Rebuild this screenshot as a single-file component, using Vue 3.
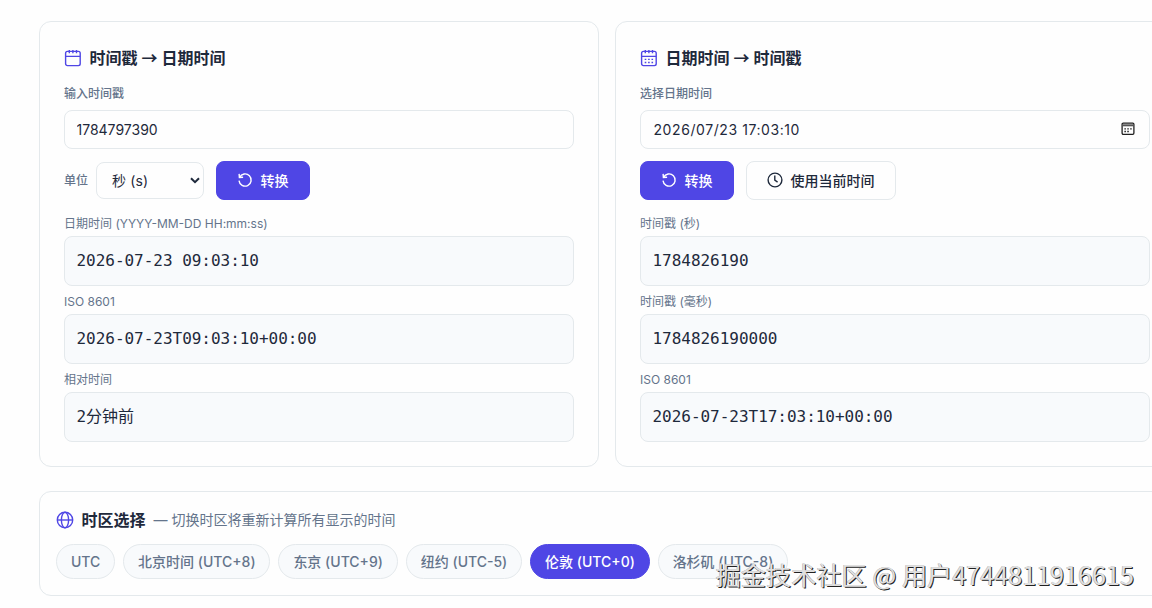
<template>
  <div class="page">
    <div class="content">
      <div class="converter-grid">
        <!-- 时间戳转日期 -->
        <section class="card">
          <h2 class="card-title">
            <svg class="title-icon" viewBox="0 0 18 18">
              <rect x="1.6" y="2.4" width="14.6" height="14.2" rx="1.8" />
              <path d="M1.6 7.4h14.6M5.3 1v3.2M8.9 1v3.2M12.5 1v3.2" />
            </svg>
            <span>时间戳 <span class="arrow">→</span> 日期时间</span>
          </h2>
          <label class="field-label">输入时间戳</label>
          <input v-model="timestamp" class="field" type="text" />
          <div class="actions">
            <span class="unit-label">单位</span>
            <div class="select">
              <span>秒 (s)</span>
              <svg class="chevron" viewBox="0 0 10 7"><path d="M1 1.2l4 4 4-4" /></svg>
            </div>
            <button class="btn primary">
              <svg class="btn-icon" viewBox="0 0 16 16">
                <path d="M2.6 5.3A6.1 6.1 0 1 1 2 8.7M2.1 1.9l.3 3.6 3.7-.3" />
              </svg>
              <span>转换</span>
            </button>
          </div>
          <div v-for="item in dateResults" :key="item.label" class="result">
            <div class="result-label">{{ item.label }}</div>
            <div class="result-value">{{ item.value }}</div>
          </div>
        </section>

        <!-- 日期转时间戳 -->
        <section class="card">
          <h2 class="card-title">
            <svg class="title-icon" viewBox="0 0 18 18">
              <rect x="1.6" y="2.4" width="14.6" height="14.2" rx="1.8" />
              <path d="M1.6 7.4h14.6M5.3 1v3.2M8.9 1v3.2M12.5 1v3.2" />
              <path class="dots" d="M4.7 10.4h1.6M8.1 10.4h1.6M11.5 10.4h1.6M4.7 13.5h1.6M8.1 13.5h1.6M11.5 13.5h1.6" />
            </svg>
            <span>日期时间 <span class="arrow">→</span> 时间戳</span>
          </h2>
          <label class="field-label">选择日期时间</label>
          <div class="field datetime">
            <span>2026/07/23 17:03:10</span>
            <svg class="picker-icon" viewBox="0 0 14 14">
              <rect x="1.1" y="1.1" width="11.8" height="11.2" rx="1.2" />
              <path d="M1 3.3h12" class="bar" />
              <path class="cells" d="M3.4 6.8h1.5M6.3 6.8h1.5M9.2 6.8h1.5M3.4 9.5h1.5M6.3 9.5h1.5" />
            </svg>
          </div>
          <div class="actions">
            <button class="btn primary">
              <svg class="btn-icon" viewBox="0 0 16 16">
                <path d="M2.6 5.3A6.1 6.1 0 1 1 2 8.7M2.1 1.9l.3 3.6 3.7-.3" />
              </svg>
              <span>转换</span>
            </button>
            <button class="btn outline">
              <svg class="btn-icon" viewBox="0 0 16 16">
                <circle cx="8" cy="8" r="6.9" />
                <path d="M7.8 3.6v4.6l2.8 1.9" />
              </svg>
              <span>使用当前时间</span>
            </button>
          </div>
          <div v-for="item in stampResults" :key="item.label" class="result">
            <div class="result-label">{{ item.label }}</div>
            <div class="result-value">{{ item.value }}</div>
          </div>
        </section>
      </div>

      <!-- 时区 -->
      <section class="card zone-card">
        <h2 class="zone-title">
          <svg class="title-icon" viewBox="0 0 18 18">
            <circle cx="9" cy="9" r="7.7" />
            <ellipse cx="9" cy="9" rx="3.6" ry="7.7" />
            <path d="M1.3 9h15.4" />
          </svg>
          <span>时区选择</span>
          <small>— 切换时区将重新计算所有显示的时间</small>
        </h2>
        <div class="zones">
          <button
            v-for="zone in zones"
            :key="zone"
            class="zone"
            :class="{ active: zone === activeZone }"
            @click="activeZone = zone"
          >{{ zone }}</button>
        </div>
      </section>
    </div>
    <div class="watermark">掘金技术社区 @ 用户4744811916615</div>
  </div>
</template>

<script setup>
import { ref } from 'vue'

const timestamp = ref('1784797390')

const dateResults = [
  { label: '日期时间 (YYYY-MM-DD HH:mm:ss)', value: '2026-07-23 09:03:10' },
  { label: 'ISO 8601', value: '2026-07-23T09:03:10+00:00' },
  { label: '相对时间', value: '2分钟前' }
]

const stampResults = [
  { label: '时间戳 (秒)', value: '1784826190' },
  { label: '时间戳 (毫秒)', value: '1784826190000' },
  { label: 'ISO 8601', value: '2026-07-23T17:03:10+00:00' }
]

const zones = [
  'UTC',
  '北京时间 (UTC+8)',
  '东京 (UTC+9)',
  '纽约 (UTC-5)',
  '伦敦 (UTC+0)',
  '洛杉矶 (UTC-8)'
]
const activeZone = ref('伦敦 (UTC+0)')
</script>

<style>
body {
  background: #fefefe;
}
</style>

<style scoped>
.page {
  position: relative;
  box-sizing: border-box;
  height: 608px;
  padding: 21px 0 0 39px;
  overflow: hidden;
  font-family: Inter, 'Noto Sans CJK SC', sans-serif;
  color: #1e293b;
}

.page * {
  box-sizing: border-box;
}

.content {
  width: 1136px;
}

.converter-grid {
  display: grid;
  grid-template-columns: 1fr 1fr;
  gap: 16px;
}

.card {
  height: 446px;
  padding: 24px;
  border: 1px solid #e4e9ec;
  border-radius: 12px;
  background: #fefefe;
}

.card-title,
.zone-title {
  display: flex;
  align-items: center;
  gap: 7.5px;
  margin: 0;
  font-size: 16px;
  font-weight: 600;
  line-height: 24px;
}

.card-title {
  height: 24px;
  margin-bottom: 14px;
}

.arrow {
  font-family: 'Noto Sans CJK SC', sans-serif;
  line-height: 1;
}

.title-icon {
  width: 18px;
  height: 18px;
  fill: none;
  stroke: #4f46e5;
  stroke-width: 1.4;
}

.title-icon .dots {
  stroke-width: 1.4;
}

.field-label {
  display: block;
  height: 20px;
  margin-bottom: 6px;
  font-size: 12px;
  font-weight: 500;
  line-height: 20px;
  color: #64748b;
}

.field {
  display: flex;
  align-items: center;
  width: 100%;
  height: 39px;
  padding: 0 11.5px;
  border: 1px solid #e4e9ec;
  border-radius: 8px;
  outline: none;
  background: #fefefe;
  font-family: inherit;
  font-size: 14px;
  color: #1e293b;
}

.datetime {
  justify-content: space-between;
  padding: 0 14px 0 12.5px;
  letter-spacing: 0.58px;
}

.picker-icon {
  width: 14px;
  height: 14px;
  margin-bottom: 1px;
  fill: none;
  stroke: #1f1f1f;
  stroke-width: 1.3;
}

.picker-icon .bar {
  stroke-width: 2;
  stroke: #555;
}

.actions {
  display: flex;
  align-items: center;
  height: 39px;
  margin: 12px 0 14px;
}

.unit-label {
  width: 32px;
  padding-bottom: 2px;
  font-size: 12px;
  font-weight: 500;
  color: #64748b;
}

.select {
  display: flex;
  align-items: center;
  justify-content: space-between;
  width: 108px;
  height: 37px;
  margin-right: 12px;
  padding: 0 3px 0 15px;
  border: 1px solid #e4e9ec;
  border-radius: 8px;
  font-size: 14px;
}

.select span {
  padding-bottom: 2px;
  letter-spacing: 0.15px;
}

.chevron {
  width: 10px;
  height: 7px;
  fill: none;
  stroke: #1e293b;
  stroke-width: 2;
}

.btn {
  display: flex;
  align-items: center;
  gap: 7.5px;
  height: 39px;
  margin: 0 12px 0 0;
  padding: 0 20.5px 0 20px;
  border: 1px solid #4f46e5;
  border-radius: 8px;
  font-family: inherit;
  font-size: 14px;
  font-weight: 500;
}

.btn span {
  padding-bottom: 2px;
}

.btn.primary {
  background: #4f46e5;
  color: #fff;
}

.btn.outline {
  border-color: #e4e9ec;
  background: #fefefe;
  color: #1e293b;
}

.btn-icon {
  width: 16px;
  height: 16px;
  margin-bottom: 1px;
  fill: none;
  stroke: currentColor;
  stroke-width: 1.4;
}

.result-label {
  height: 22px;
  font-size: 12px;
  line-height: 20px;
  color: #64748b;
}

.result-value {
  display: flex;
  align-items: center;
  height: 50px;
  margin-bottom: 6px;
  padding: 0 12px 0 11.5px;
  border: 1px solid #e4e9ec;
  border-radius: 8px;
  background: #f8fafc;
  font-family: 'DejaVu Sans Mono', 'Noto Sans CJK SC', monospace;
  font-size: 16px;
  line-height: 20px;
  letter-spacing: -0.03px;
}

.zone-card {
  height: 105px;
  margin-top: 24px;
  padding: 16px;
}

.zone-title small {
  margin-left: 0.5px;
  font-size: 14px;
  font-weight: 400;
  color: #64748b;
}

.zones {
  display: flex;
  gap: 8px;
  margin-top: 12px;
}

.zone {
  height: 35px;
  padding: 0 13.9px;
  border: 1px solid #e4e9ec;
  border-radius: 18px;
  background: #f8fafc;
  font-family: inherit;
  font-size: 14px;
  font-weight: 500;
  line-height: 20px;
  color: #64748b;
}

.zone.active {
  border-color: #4f46e5;
  background: #4f46e5;
  color: #fff;
}

.watermark {
  position: absolute;
  right: 18px;
  bottom: 17px;
  font-family: 'Noto Sans CJK SC', sans-serif;
  font-size: 25.2px;
  line-height: 34px;
  color: #e0e0e0;
  text-shadow: 1px 1px 0 #222, -0.5px -0.5px 0 #aaa;
}
</style>
